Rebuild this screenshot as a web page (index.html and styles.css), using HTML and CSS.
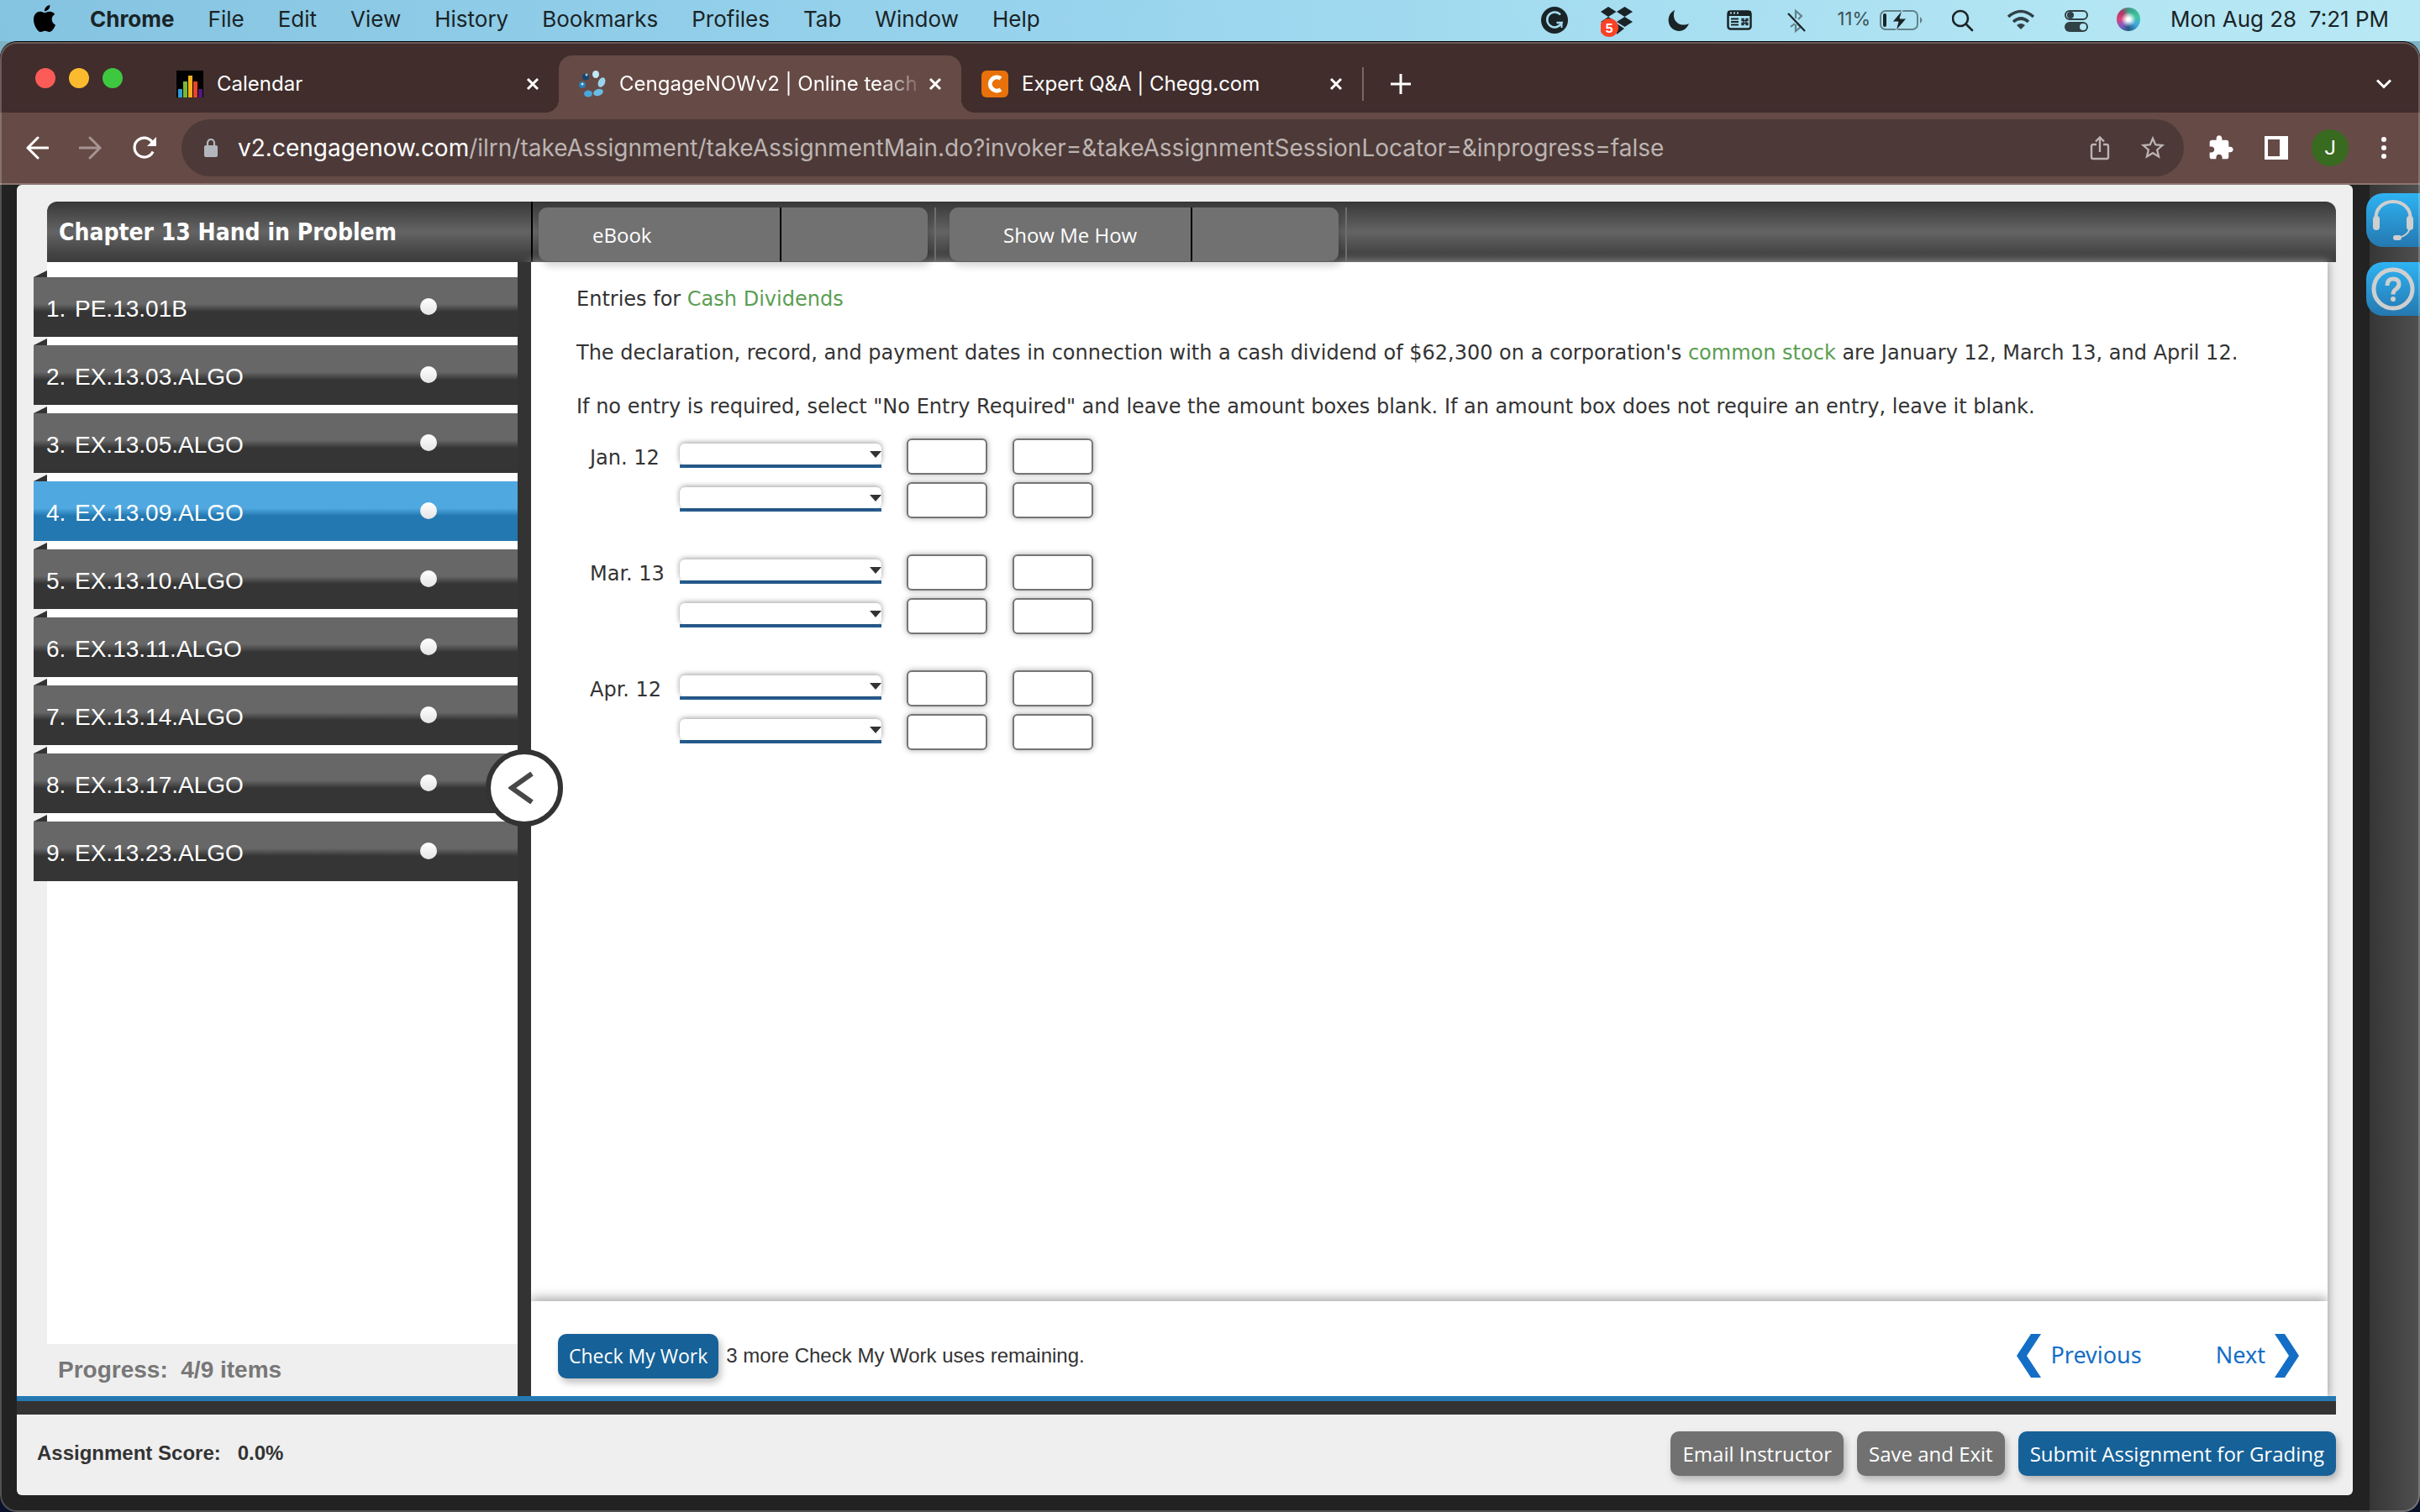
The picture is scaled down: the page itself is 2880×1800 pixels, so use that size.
FILE: index.html
```html
<!DOCTYPE html>
<html lang="en">
<head>
<meta charset="UTF-8">
<title>CengageNOWv2 | Online teaching and learning</title>
<link rel="stylesheet" href="styles.css">
</head>

<body>

<!--Menu bar-->
<div class="menubar">
  <nav class="menus">
    <svg class="apple" viewBox="0 0 24 24"><path d="M12.152 6.896c-.948 0-2.415-1.078-3.96-1.04-2.04.027-3.91 1.183-4.961 3.014-2.117 3.675-.546 9.103 1.519 12.09 1.013 1.454 2.208 3.09 3.792 3.039 1.52-.065 2.09-.987 3.935-.987 1.831 0 2.35.987 3.96.948 1.637-.026 2.676-1.48 3.676-2.948 1.156-1.688 1.636-3.325 1.662-3.415-.039-.013-3.182-1.221-3.22-4.857-.026-3.04 2.48-4.494 2.597-4.559-1.429-2.09-3.623-2.324-4.39-2.376-2-.156-3.675 1.09-4.61 1.09zM15.53 3.83c.843-1.012 1.4-2.427 1.245-3.83-1.207.052-2.662.805-3.532 1.818-.78.896-1.454 2.338-1.273 3.714 1.338.104 2.715-.688 3.559-1.701"/></svg>
    <b>Chrome</b>
    <span>File</span>
    <span>Edit</span>
    <span>View</span>
    <span>History</span>
    <span>Bookmarks</span>
    <span>Profiles</span>
    <span>Tab</span>
    <span>Window</span>
    <span>Help</span>
  </nav>
  <div class="status">
    <svg width="38" height="48" viewBox="0 0 38 48"><circle cx="17" cy="24" r="16" fill="#1a2426"/><path d="M24 17.500A9 9 0 1 0 25.500 27H19.500" fill="none" stroke="#a6dcef" stroke-width="2.500"/><path d="M25.500 26v7" stroke="#a6dcef" stroke-width="2"/></svg>
    <svg width="44" height="48" viewBox="0 0 44 48"><g fill="#1a2426"><path d="M9 8l9.500 6L9 20l-9-6zM28.500 8l9.500 6-9.500 6-9.500-6zM9 20l9.500 6L9 32l-9-6zM28.500 20l9.500 6-9.500 6-9.500-6zM19 28l9 6-9 7z"/></g><circle cx="10" cy="33" r="11" fill="#fc4127"/><text x="10" y="39" class="badge">5</text></svg>
    <svg width="38" height="48" viewBox="0 0 38 48"><path d="M10 12C-1 17 0 36 15 37c6 0 10-4 12-9-9 5-22-2-17-16z" fill="#1a2426"/></svg>
    <svg width="38" height="48" viewBox="0 0 38 48"><rect x="1.500" y="13.500" width="27" height="21" rx="3" fill="none" stroke="#1a2426" stroke-width="2.500"/><path d="M1 13h28v6H1z" fill="#1a2426"/><path d="M4 15.500h2M8 15.500h2M12 15.500h2" stroke="#a6dcef" stroke-width="2"/><path d="M5 22.500h9M5 26h9M5 29.500h9" stroke="#1a2426" stroke-width="1.800"/><path d="M20 24.500h3v3h-3zM20 24.500h-2v-2h2zM23 24.500h2v-2h-2zM20 27.500h-2v2h2zM23 27.500h2v2h-2z" fill="none" stroke="#1a2426" stroke-width="1.300"/></svg>
    <svg width="26" height="48" viewBox="0 0 26 48" fill="none" stroke-width="2.200"><path d="M4 32l5-4M10 22v-9l7 6-4 4M10 29v8l6-5-4-4" stroke="#62828b"/><path d="M1 16l20 21" stroke="#1a2426"/></svg>
    <div class="power">
      <span>11%</span>
      <svg width="52" height="48" viewBox="0 0 52 48"><rect x="1" y="13" width="44" height="22" rx="6" fill="none" stroke="#62828b" stroke-width="2"/><path d="M48 20q5 4 0 8z" fill="#62828b"/><rect x="4" y="16" width="4" height="16" rx="2" fill="#1a2426"/><path d="M27 12L15 26h7l-3 11 13-15h-8z" fill="#1a2426" stroke="#aee1f1" stroke-width="1"/></svg>
    </div>
    <svg width="32" height="48" viewBox="0 0 32 48" fill="none" stroke="#1a2426" stroke-width="2.600" stroke-linecap="round"><circle cx="10" cy="22" r="9"/><path d="M17 29l7 7"/></svg>
    <svg width="34" height="48" viewBox="0 0 34 48" fill="none" stroke="#2f4145" stroke-width="3.600"><path d="M1 20q15-13 30 0"/><path d="M7 26q9-8 18 0"/><path d="M16 35l-5-5q5-4 10 0z" fill="#2f4145" stroke="none"/></svg>
    <svg width="28" height="48" viewBox="0 0 28 48"><rect x="1" y="13" width="26" height="10" rx="5" fill="none" stroke="#2f4145" stroke-width="2"/><circle cx="7" cy="18" r="4" fill="#2f4145"/><rect x="0" y="26" width="28" height="12" rx="6" fill="#2f4145"/><circle cx="22" cy="32" r="4" fill="#b5e6f3"/></svg>
    <span class="siri"></span>
    <time class="clock">Mon Aug 28&nbsp; 7:21 PM</time>
  </div>
</div>

<div class="window">

<!--Tabs-->
<div class="tabstrip">
  <div class="lights"><i class="red"></i><i class="yellow"></i><i class="green"></i></div>
  <div class="tab tab-first">
    <svg width="32" height="32" viewBox="0 0 32 32"><path d="M0 0h32v32H0z"/><path d="M2 22h5v10H2z" fill="#2a9fd8"/><path d="M8 13h5v19H8z" fill="#7cb82f"/><path d="M14 6h5v26h-5z" fill="#f5b01c"/><path d="M20 13h5v19h-5z" fill="#e8442a"/><path d="M26 22h5v10h-5z" fill="#54187f"/></svg>
    <span class="tab-title">Calendar</span>
    <button class="close" aria-label="Close tab"><svg width="12" height="12" viewBox="0 0 12 12"><path d="M0 0l12 12M12 0L0 12"/></svg></button>
  </div>
  <div class="tab tab-active">
    <svg width="32" height="32" viewBox="0 0 32 32"><ellipse cx="20" cy="4.500" rx="4" ry="4.500" fill="#c3e8f8"/><ellipse cx="27" cy="14" rx="4" ry="6" fill="#9bd3ef" transform="rotate(25 27 14)"/><ellipse cx="23" cy="26" rx="6" ry="4" fill="#6bbbe2" transform="rotate(-20 23 26)"/><ellipse cx="11" cy="27.500" rx="5" ry="4" fill="#4aa5d8"/><circle cx="4" cy="17" r="4" fill="#2a7db5"/><circle cx="4" cy="16" r="1.500" fill="#c3e8f8"/><circle cx="8" cy="7.500" r="4" fill="#17456e"/><circle cx="9" cy="5" r="1.500" fill="#9bd3ef"/></svg>
    <span class="tab-title fade">CengageNOWv2 | Online teach</span>
    <button class="close" aria-label="Close tab"><svg width="12" height="12" viewBox="0 0 12 12"><path d="M0 0l12 12M12 0L0 12"/></svg></button>
  </div>
  <div class="tab tab-last">
    <svg width="32" height="32" viewBox="0 0 32 32"><rect width="32" height="32" rx="6" fill="#e8710a"/><path d="M23 9.500a8 8 0 1 0 0 13" fill="none" stroke="#fff" stroke-width="5"/></svg>
    <span class="tab-title">Expert Q&amp;A | Chegg.com</span>
    <button class="close" aria-label="Close tab"><svg width="12" height="12" viewBox="0 0 12 12"><path d="M0 0l12 12M12 0L0 12"/></svg></button>
  </div>
  <button class="newtab" aria-label="New tab"><svg width="24" height="24" viewBox="0 0 24 24"><path d="M12 0v24M0 12h24"/></svg></button>
  <button class="tabsearch" aria-label="Search tabs"><svg width="18" height="12" viewBox="0 0 18 12"><path d="M1 1.500l8 8 8-8"/></svg></button>
</div>

<!--Toolbar-->
<div class="toolbar">
  <button aria-label="Back"><svg width="28" height="28" viewBox="0 0 28 28" class="line"><path d="M27 14H3M15 2L3 14l12 12"/></svg></button>
  <button aria-label="Forward"><svg width="28" height="28" viewBox="0 0 28 28" class="line dim"><path d="M1 14h24M13 2l12 12-12 12"/></svg></button>
  <button aria-label="Reload"><svg width="28" height="28" viewBox="0 0 28 28"><path d="M24 18.500A11.500 11.500 0 1 1 23 7" fill="none" stroke="#fff" stroke-width="3.200"/><path d="M28 1v11H17z" fill="#fff"/></svg></button>
  <div class="omnibox">
    <svg width="16" height="22" viewBox="0 0 16 22"><rect y="8" width="16" height="14" rx="2" fill="#b3b7bd"/><path d="M4 9V5a4 4 0 0 1 8 0v4" fill="none" stroke="#b3b7bd" stroke-width="2.200"/></svg>
    <span class="url"><b>v2.cengagenow.com</b>/ilrn/takeAssignment/takeAssignmentMain.do?invoker=&amp;takeAssignmentSessionLocator=&amp;inprogress=false</span>
    <svg width="24" height="30" viewBox="0 0 24 30" fill="none" stroke="#bcb4b2" stroke-width="2.400"><path d="M8 11H4q-2 0-2 2v13q0 2 2 2h16q2 0 2-2V13q0-2-2-2h-4M12 20V3M7 7.500l5-5 5 5"/></svg>
    <svg width="34" height="34" viewBox="0 0 24 24" fill="#bcb4b2"><path d="M22 9.240l-7.190-.620L12 2 9.190 8.630 2 9.240l5.460 4.730L5.820 21 12 17.270 18.180 21l-1.630-7.030L22 9.240zM12 15.400l-3.760 2.270 1-4.280-3.320-2.880 4.380-.380L12 6.100l1.710 4.040 4.380.380-3.320 2.880 1 4.280L12 15.400z"/></svg>
  </div>
  <button aria-label="Extensions"><svg width="32" height="32" viewBox="0 0 24 24" fill="#fff"><path d="M20.500 11H19V7c0-1.100-.9-2-2-2h-4V3.500C13 2.120 11.880 1 10.500 1S8 2.120 8 3.500V5H4c-1.100 0-1.990.9-1.990 2v3.800H3.500c1.490 0 2.700 1.210 2.700 2.700s-1.210 2.700-2.700 2.700H2V20c0 1.100.9 2 2 2h3.800v-1.500c0-1.490 1.210-2.700 2.700-2.700 1.490 0 2.700 1.210 2.700 2.700V22H17c1.100 0 2-.9 2-2v-4h1.500c1.380 0 2.500-1.120 2.500-2.500S21.880 11 20.500 11z"/></svg></button>
  <button aria-label="Side panel"><svg width="28" height="28" viewBox="0 0 28 28"><path d="M0 0h28v28H0zM4 4v20h14V4z" fill="#fff" fill-rule="evenodd"/></svg></button>
  <button class="avatar">J</button>
  <button aria-label="More"><svg width="6" height="26" viewBox="0 0 6 26" fill="#fff"><circle cx="3" cy="3" r="3"/><circle cx="3" cy="13" r="3"/><circle cx="3" cy="23" r="3"/></svg></button>
</div>

<!--Page-->
<div class="page">
  <div class="frame">
    <header class="header">
      <h1>Chapter 13 Hand in Problem</h1>
      <div class="tools">
        <button class="tool"><span>eBook</span></button>
        <button class="tool"><span>Show Me How</span></button>
      </div>
    </header>

    <div class="work">
      <aside class="sidebar">
        <div class="panel">
          <ol class="items">
            <li><a href="#"><span>1.</span>PE.13.01B<i></i></a></li>
            <li><a href="#"><span>2.</span>EX.13.03.ALGO<i></i></a></li>
            <li><a href="#"><span>3.</span>EX.13.05.ALGO<i></i></a></li>
            <li><a href="#" class="current"><span>4.</span>EX.13.09.ALGO<i></i></a></li>
            <li><a href="#"><span>5.</span>EX.13.10.ALGO<i></i></a></li>
            <li><a href="#"><span>6.</span>EX.13.11.ALGO<i></i></a></li>
            <li><a href="#"><span>7.</span>EX.13.14.ALGO<i></i></a></li>
            <li><a href="#"><span>8.</span>EX.13.17.ALGO<i></i></a></li>
            <li><a href="#"><span>9.</span>EX.13.23.ALGO<i></i></a></li>
          </ol>
        </div>
        <div class="progress">Progress:&nbsp; 4/9 items</div>
        <button class="collapse" aria-label="Hide list"><svg width="30" height="38" viewBox="0 0 30 38"><path d="M28 2L4 19l24 17"/></svg></button>
      </aside>

      <main class="main">
        <div class="question">
          <p>Entries for <a href="#">Cash Dividends</a></p>
          <p>The declaration, record, and payment dates in connection with a cash dividend of $62,300 on a corporation's <a href="#">common stock</a> are January 12, March 13, and April 12.</p>
          <p>If no entry is required, select "No Entry Required" and leave the amount boxes blank. If an amount box does not require an entry, leave it blank.</p>

          <div class="entry">
            <label for="jan">Jan. 12</label>
            <div class="pick"><select id="jan"><option></option></select></div>
            <input type="text" aria-label="Jan. 12 debit"><input type="text" aria-label="Jan. 12 credit">
            <div class="pick second"><select aria-label="Jan. 12 account 2"><option></option></select></div>
            <input type="text" aria-label="Jan. 12 debit 2"><input type="text" aria-label="Jan. 12 credit 2">
          </div>
          <div class="entry">
            <label for="mar">Mar. 13</label>
            <div class="pick"><select id="mar"><option></option></select></div>
            <input type="text" aria-label="Mar. 13 debit"><input type="text" aria-label="Mar. 13 credit">
            <div class="pick second"><select aria-label="Mar. 13 account 2"><option></option></select></div>
            <input type="text" aria-label="Mar. 13 debit 2"><input type="text" aria-label="Mar. 13 credit 2">
          </div>
          <div class="entry">
            <label for="apr">Apr. 12</label>
            <div class="pick"><select id="apr"><option></option></select></div>
            <input type="text" aria-label="Apr. 12 debit"><input type="text" aria-label="Apr. 12 credit">
            <div class="pick second"><select aria-label="Apr. 12 account 2"><option></option></select></div>
            <input type="text" aria-label="Apr. 12 debit 2"><input type="text" aria-label="Apr. 12 credit 2">
          </div>
        </div>

        <div class="checkbar">
          <button class="btn blue check">Check My Work</button>
          <span>3 more Check My Work uses remaining.</span>
          <nav class="pager">
            <a href="#"><svg width="30" height="52" viewBox="0 0 30 52"><path d="M17 0h12L12 26l17 26H17L0 26z"/></svg>Previous</a>
            <a href="#">Next<svg width="30" height="52" viewBox="0 0 30 52"><path d="M13 0H1l17 26L1 52h12l17-26z"/></svg></a>
          </nav>
        </div>
      </main>
    </div>

    <footer class="footer">
      <div class="score">Assignment Score: &nbsp; 0.0%</div>
      <button class="btn">Email Instructor</button>
      <button class="btn">Save and Exit</button>
      <button class="btn blue">Submit Assignment for Grading</button>
    </footer>
  </div>

  <div class="rail">
    <button aria-label="Support"><svg width="50" height="50" viewBox="0 0 50 50"><path d="M5 24C3 13 12 3 25 3s22 10 20 21" fill="none" stroke="#cfcfcf" stroke-width="4"/><rect x="1" y="20" width="8" height="17" rx="4" fill="#cfcfcf"/><rect x="41" y="20" width="8" height="17" rx="4" fill="#cfcfcf"/><path d="M45 35q-3 9-14 11" fill="none" stroke="#cfcfcf" stroke-width="2"/><rect x="25" y="43" width="10" height="6" rx="3" fill="#cfcfcf"/></svg></button>
    <button aria-label="Help"><svg width="52" height="52" viewBox="0 0 52 52"><circle cx="26" cy="26" r="23" fill="none" stroke="#cfcfcf" stroke-width="5"/><path d="M19 22q0-8 7-8 7 0 7 6 0 4-4 6.500-3 2-3 6" fill="none" stroke="#cfcfcf" stroke-width="5"/><circle cx="26" cy="38" r="3" fill="#cfcfcf"/></svg></button>
  </div>
</div>

</div>
</body>
</html>
```
FILE: styles.css
```css
*{
   box-sizing:border-box;
}
body{
   margin:0;
   height:100vh;
   display:flex;
   flex-direction:column;
   overflow:hidden;
   background:linear-gradient(#7fb2c4 0, #7fb2c4 120px, #08122a 121px);
   font-family:"Open Sans", sans-serif;
   color:#333;
}
button{
   padding:0;
   border:0;
   background:none;
   font:inherit;
   color:inherit;
}
a{
   text-decoration:none;
}
svg{
   display:block;
   flex:none;
}

/* menu bar */
.menubar{
   height:49px;
   flex:none;
   display:flex;
   justify-content:space-between;
   padding:0 37px;
   background:linear-gradient(90deg, #85c4e1, #9ad5ee 48%, #b2e5f3 85%, #b8e8f4);
   font:26px/46px Inter, sans-serif;
   color:#1a2426;
}
.menus,.status{
   display:flex;
   height:46px;
   align-items:center;
}
.menus{
   gap:40px;
}
.menus b{
   margin-left:-2px;
}
.status{
   gap:34px;
}
.status svg{
   margin-top:2px;
}
.apple{
   width:32px;
   height:32px;
   margin-bottom:2px;
}
.badge{
   font:bold 15px Inter, sans-serif;
   fill:#fff;
   text-anchor:middle;
}
.power{
   display:flex;
   gap:11px;
   font-size:22px;
   line-height:48px;
   color:#3c5156;
}
.siri{
   width:28px;
   height:28px;
   border-radius:50%;
   background:radial-gradient(circle at 50% 50%, #fff 0 10%, transparent 45%), conic-gradient(#3a9e86, #3fc7a0 20%, #3fa8e0 35%, #245a86 50%, #7b5cc0 62%, #d8447c 75%, #b03565 88%, #3a9e86);
}
.clock{
   min-width:262px;
   text-align:right;
}

/* browser window */
.window{
   position:relative;
   flex:1;
   display:flex;
   flex-direction:column;
   overflow:hidden;
   border-top:1px solid #000;
   border-radius:20px;
   background:#222;
}
.window::after{
   content:"";
   position:absolute;
   inset:0;
   border:2px solid rgba(255,255,255,0.22);
   border-radius:20px;
   pointer-events:none;
}
.tabstrip{
   height:84px;
   flex:none;
   display:flex;
   padding:16px 34px 0 42px;
   background:#402d2c;
   color:#fff;
   font:24px/68px Inter, sans-serif;
}
.lights{
   display:flex;
   gap:16px;
   width:144px;
   padding-top:15px;
}
.lights i{
   width:24px;
   height:24px;
   border-radius:50%;
}
.red{
   background:#fc5b57;
}
.yellow{
   background:#fcbb2f;
}
.green{
   background:#3ec840;
}
.tab{
   position:relative;
   display:flex;
   align-items:center;
   gap:16px;
   width:479px;
   padding:0 23px 0 24px;
}
.tab-active{
   border-radius:16px 16px 0 0;
   background:#664a45;
}
.tab-active::before,.tab-active::after{
   content:"";
   position:absolute;
   bottom:0;
   width:16px;
   height:16px;
}
.tab-active::before{
   left:-16px;
   background:radial-gradient(circle at 0 0, transparent 16px, #664a45 16px);
}
.tab-active::after{
   right:-16px;
   background:radial-gradient(circle at 100% 0, transparent 16px, #664a45 16px);
}
.tab-title{
   flex:1;
   white-space:nowrap;
}
.fade{
   margin-right:-12px;
   -webkit-mask-image:linear-gradient(90deg, #000 85%, transparent);
   mask-image:linear-gradient(90deg, #000 85%, transparent);
}
.close,.newtab,.tabsearch{
   stroke:#fff;
   stroke-width:3;
   fill:none;
}
.close svg{
   overflow:visible;
   margin:0 2px;
}
.tab-last{
   border-right:2px solid #7a6866;
   height:40px;
   margin-top:14px;
}
.newtab{
   margin-left:32px;
}
.tabsearch{
   margin-left:auto;
}

/* toolbar */
.toolbar{
   height:86px;
   flex:none;
   display:flex;
   align-items:center;
   gap:36px;
   padding:0 40px 0 30px;
   border-bottom:2px solid #8b7572;
   background:#664a45;
   color:#fff;
}
.line{
   fill:none;
   stroke:#fff;
   stroke-width:3;
   stroke-linecap:round;
}
.dim{
   stroke:#a69592;
}
.omnibox{
   flex:1;
   min-width:0;
   display:flex;
   align-items:center;
   height:68px;
   margin-left:-6px;
   margin-right:-8px;
   padding:0 20px 0 27px;
   border-radius:34px;
   background:#4d3a38;
   color:#bcb4b2;
   font:28px/68px Inter, sans-serif;
}
.url{
   flex:1;
   margin-left:24px;
   overflow:hidden;
   white-space:nowrap;
}
.url b{
   font-weight:400;
   color:#fff;
}
.omnibox svg:last-child{
   margin-left:34px;
}
.avatar{
   width:44px;
   height:44px;
   margin:0 3px 0 -8px;
   border-radius:50%;
   background:#386a1f;
   font:24px/44px Roboto, sans-serif;
}

/* page */
.page{
   flex:1;
   min-height:0;
   display:flex;
   padding:0 0 20px 20px;
}
.frame{
   flex:1;
   display:flex;
   flex-direction:column;
   border-radius:6px;
   background:#efefef;
}
.header{
   display:flex;
   height:72px;
   margin:20px 20px 0 36px;
   border-radius:12px 12px 0 0;
   background:linear-gradient(#383838, #646464 50%, #444 85%, #3c3c3c);
   color:#fff;
}
.header h1{
   width:578px;
   margin:0;
   padding-left:14px;
   border-right:2px solid #000;
   font:bold 28px/74px "DejaVu Sans Condensed", "DejaVu Sans", sans-serif;
   font-stretch:condensed;
}
.tools{
   position:relative;
   z-index:2;
   display:flex;
   gap:26px;
   padding:7px 0 1px 7px;
}
.tool{
   position:relative;
   display:flex;
   width:463px;
   border-radius:10px;
   background:#717171;
   box-shadow:4px 6px 8px rgba(0,0,0,0.16);
   font-size:24px;
   line-height:66px;
}
.tool span{
   flex:none;
   width:289px;
   padding-left:64px;
   border-right:2px solid #000;
   text-align:left;
}
/* thin rule after each tool */
.tool::after{
   content:"";
   position:absolute;
   top:0;
   right:-10px;
   width:2px;
   height:64px;
   background:#6e6e6e;
}

.work{
   flex:1;
   display:flex;
   margin-right:20px;
   padding-right:10px;
   background:#efefef;
}
.sidebar{
   position:relative;
   width:612px;
   display:flex;
   flex-direction:column;
   border-right:16px solid #333;
   z-index:3;
}
.panel{
   flex:1;
   margin-left:36px;
   padding-top:18px;
   background:#fff;
}
.items{
   display:flex;
   flex-direction:column;
   gap:10px;
   margin:0 0 0 -16px;
   padding:0;
   list-style:none;
   font:28px/76px "Liberation Sans", Arial, sans-serif;
}
.items a{
   position:relative;
   display:flex;
   height:71px;
   padding-left:15px;
   background:linear-gradient(#676767 45%, #353535 58%);
   color:#fff;
}
.items a::before{
   content:"";
   position:absolute;
   left:0;
   top:-8px;
   border-left:16px solid transparent;
   border-bottom:8px solid #333;
}
.items .current{
   background:linear-gradient(#50a8e0 45%, #2378b1 58%);
}
.items span{
   width:34px;
}
.items i{
   width:20px;
   height:20px;
   margin:25px 96px 0 auto;
   border-radius:50%;
   background:linear-gradient(#fff, #e4e4e4);
}
.progress{
   height:62px;
   padding-left:49px;
   font:bold 28px/62px "Liberation Sans", Arial, sans-serif;
   color:#777;
}
.collapse{
   position:absolute;
   right:-54px;
   top:580px;
   display:flex;
   align-items:center;
   justify-content:center;
   width:92px;
   height:92px;
   padding-right:8px;
   border:6px solid #333;
   border-radius:50%;
   background:#fff;
}
.collapse path{
   fill:none;
   stroke:#484848;
   stroke-width:6;
}

.main{
   position:relative;
   flex:1;
   display:flex;
   flex-direction:column;
   background:#fff;
   box-shadow:0 0 10px 1px #999;
}
.question{
   flex:1;
   padding:28px 54px 0;
   font:24px/32px "DejaVu Sans", Verdana, sans-serif;
}
.question p{
   margin:0 0 32px;
}
.question a{
   color:#5a9e52;
}
.entry{
   display:grid;
   grid-template-columns:77px 240px 96px 96px;
   grid-auto-rows:43px;
   column-gap:30px;
   row-gap:9px;
   margin:0 0 43px 16px;
}
.question p + .entry{
   margin-top:-10px;
}
.entry label{
   line-height:46px;
   white-space:nowrap;
}
.pick{
   position:relative;
   height:29px;
   margin-top:6px;
   border-bottom:4px solid #285f93;
}
.second{
   grid-column:2;
}
.pick::after{
   content:"";
   position:absolute;
   right:0;
   top:9px;
   border:7px solid transparent;
   border-top:8px solid #333;
   border-bottom:0;
}
.pick select{
   display:block;
   width:100%;
   height:25px;
   border:0;
   border-radius:6px;
   appearance:none;
   background:#fff;
   box-shadow:0 -1px 6px rgba(0,0,0,0.4);
}
.entry input{
   width:96px;
   height:43px;
   border:2px solid #757575;
   border-radius:6px;
   background:#fff;
   box-shadow:0 0 7px rgba(0,0,0,0.35);
}

.checkbar{
   display:flex;
   align-items:center;
   gap:9px;
   height:113px;
   padding:17px 34px 0 32px;
   background:#fff;
   box-shadow:0 -4px 12px #aaa;
   font:24px/32px "Liberation Sans", Arial, sans-serif;
   clip-path:inset(-20px 0 0 0);
}
.btn{
   height:53px;
   padding:0 14px;
   border-radius:10px;
   background:#717171;
   box-shadow:3px 5px 8px rgba(0,0,0,0.25);
   color:#fff;
   font:24px/53px "Open Sans", sans-serif;
   white-space:nowrap;
}
.blue{
   background:#166198;
}
.check{
   font-size:23px;
   padding:0 13px;
}
.pager{
   display:flex;
   gap:88px;
   margin-left:auto;
   font:27px/50px "Noto Sans", "Open Sans", sans-serif;
}
.pager a{
   display:flex;
   gap:10px;
   color:#146ec6;
   fill:#146ec6;
}

.footer{
   display:flex;
   align-items:center;
   gap:16px;
   position:relative;
   height:118px;
   padding:22px 20px 4px 24px;
   font:bold 24px/28px "Liberation Sans", Arial, sans-serif;
}
/* blue and dark rules under the work area */
.footer::before{
   content:"";
   position:absolute;
   left:0;
   right:20px;
   top:0;
   height:22px;
   background:linear-gradient(#2479b3 6px, #333 6px);
}
.score{
   flex:1;
}

.rail{
   display:flex;
   flex-direction:column;
   gap:18px;
   width:80px;
   margin:0 0 -20px 0;
   padding:10px 0 0 16px;
   background:linear-gradient(90deg, #222 20px, #363636 20px, #505050);
}
.rail button{
   display:flex;
   align-items:center;
   justify-content:center;
   height:64px;
   border-radius:20px 0 0 20px;
   background:linear-gradient(#2eb3f3, #2578b0);
}
```
